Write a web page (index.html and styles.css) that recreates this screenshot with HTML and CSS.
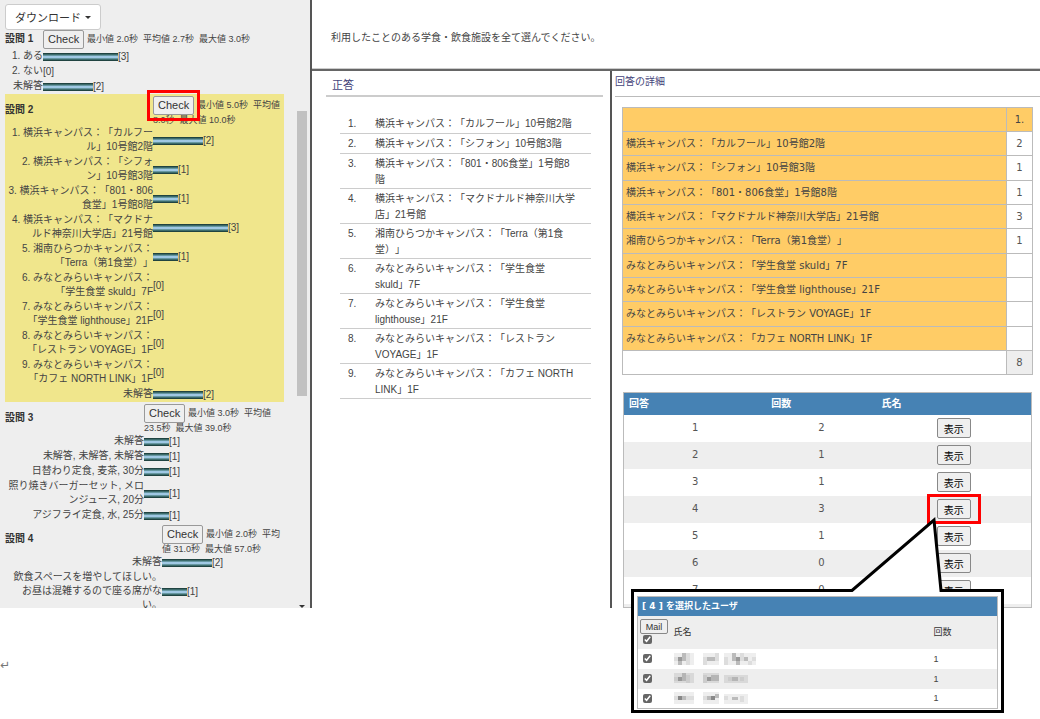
FILE: index.html
```html
<!DOCTYPE html>
<html lang="ja">
<head>
<meta charset="utf-8">
<title>アンケート集計</title>
<link rel="stylesheet" href="styles.css">
</head>
<body>
<div class="page">
  <div class="frames">
    <aside class="sidebar">
      <div class="summary">
        <button class="download" type="button">ダウンロード<span class="caret"></span></button>

        <table class="question q1">
          <tr class="head"><th scope="row">設問 1</th><td><button class="check" type="button">Check</button> <span class="stats">最小値 2.0秒&nbsp; 平均値 2.7秒&nbsp; 最大値 3.0秒</span></td></tr>
          <tr><th scope="row">1. ある</th><td><span class="bar" style="width:75px"></span>[3]</td></tr>
          <tr><th scope="row">2. ない</th><td>[0]</td></tr>
          <tr><th scope="row">未解答</th><td><span class="bar" style="width:50px"></span>[2]</td></tr>
        </table>

        <table class="question q2 selected">
          <tr class="head"><th scope="row">設問 2</th><td><span class="mark"><button class="check" type="button">Check</button></span> <span class="stats">最小値 5.0秒&nbsp; 平均値<br>8.0秒&nbsp; 最大値 10.0秒</span></td></tr>
          <tr><th scope="row">1. 横浜キャンパス：「カルフー<br>ル」10号館2階</th><td><span class="bar" style="width:50px"></span>[2]</td></tr>
          <tr><th scope="row">2. 横浜キャンパス：「シフォ<br>ン」10号館3階</th><td><span class="bar" style="width:25px"></span>[1]</td></tr>
          <tr><th scope="row">3. 横浜キャンパス：「801・806<br>食堂」1号館8階</th><td><span class="bar" style="width:25px"></span>[1]</td></tr>
          <tr><th scope="row">4. 横浜キャンパス：「マクドナ<br>ルド神奈川大学店」21号館</th><td><span class="bar" style="width:75px"></span>[3]</td></tr>
          <tr><th scope="row">5. 湘南ひらつかキャンパス：<br>「Terra（第1食堂）」</th><td><span class="bar" style="width:25px"></span>[1]</td></tr>
          <tr><th scope="row">6. みなとみらいキャンパス：<br>「学生食堂 skuld」7F</th><td>[0]</td></tr>
          <tr><th scope="row">7. みなとみらいキャンパス：<br>「学生食堂 lighthouse」21F</th><td>[0]</td></tr>
          <tr><th scope="row">8. みなとみらいキャンパス：<br>「レストラン VOYAGE」1F</th><td>[0]</td></tr>
          <tr><th scope="row">9. みなとみらいキャンパス：<br>「カフェ NORTH LINK」1F</th><td>[0]</td></tr>
          <tr><th scope="row">未解答</th><td><span class="bar" style="width:50px"></span>[2]</td></tr>
        </table>

        <table class="question q3">
          <tr class="head"><th scope="row">設問 3</th><td><button class="check" type="button">Check</button> <span class="stats">最小値 3.0秒&nbsp; 平均値<br>23.5秒&nbsp; 最大値 39.0秒</span></td></tr>
          <tr><th scope="row">未解答</th><td><span class="bar" style="width:25px"></span>[1]</td></tr>
          <tr><th scope="row">未解答, 未解答, 未解答</th><td><span class="bar" style="width:25px"></span>[1]</td></tr>
          <tr><th scope="row">日替わり定食, 麦茶, 30分</th><td><span class="bar" style="width:25px"></span>[1]</td></tr>
          <tr><th scope="row">照り焼きバーガーセット, メロ<br>ンジュース, 20分</th><td><span class="bar" style="width:25px"></span>[1]</td></tr>
          <tr><th scope="row">アジフライ定食, 水, 25分</th><td><span class="bar" style="width:25px"></span>[1]</td></tr>
        </table>

        <table class="question q4">
          <tr class="head"><th scope="row">設問 4</th><td><button class="check" type="button">Check</button> <span class="stats">最小値 2.0秒&nbsp; 平均<br>値 31.0秒&nbsp; 最大値 57.0秒</span></td></tr>
          <tr><th scope="row">未解答</th><td><span class="bar" style="width:50px"></span>[2]</td></tr>
          <tr><th scope="row">飲食スペースを増やしてほしい。<br>お昼は混雑するので座る席がな<br>い。</th><td><span class="bar" style="width:25px"></span>[1]</td></tr>
        </table>
      </div>
      <div class="scroll"><div class="thumb"></div><span class="caret"></span></div>
    </aside>

    <main class="main">
      <header class="prompt">利用したことのある学食・飲食施設を全て選んでください。</header>
      <section class="answers">
        <h2>正答</h2>
        <ol>
          <li>横浜キャンパス：「カルフール」10号館2階</li>
          <li>横浜キャンパス：「シフォン」10号館3階</li>
          <li>横浜キャンパス：「801・806食堂」1号館8<br>階</li>
          <li>横浜キャンパス：「マクドナルド神奈川大学<br>店」21号館</li>
          <li>湘南ひらつかキャンパス：「Terra（第1食<br>堂）」</li>
          <li>みなとみらいキャンパス：「学生食堂<br>skuld」7F</li>
          <li>みなとみらいキャンパス：「学生食堂<br>lighthouse」21F</li>
          <li>みなとみらいキャンパス：「レストラン<br>VOYAGE」1F</li>
          <li>みなとみらいキャンパス：「カフェ NORTH<br>LINK」1F</li>
        </ol>
      </section>
      <section class="details">
        <h2>回答の詳細</h2>
        <table class="totals">
          <tr class="top"><th></th><th scope="col">1.</th></tr>
          <tr><th scope="row">横浜キャンパス：「カルフール」10号館2階</th><td>2</td></tr>
          <tr><th scope="row">横浜キャンパス：「シフォン」10号館3階</th><td>1</td></tr>
          <tr><th scope="row">横浜キャンパス：「801・806食堂」1号館8階</th><td>1</td></tr>
          <tr><th scope="row">横浜キャンパス：「マクドナルド神奈川大学店」21号館</th><td>3</td></tr>
          <tr><th scope="row">湘南ひらつかキャンパス：「Terra（第1食堂）」</th><td>1</td></tr>
          <tr><th scope="row">みなとみらいキャンパス：「学生食堂 skuld」7F</th><td></td></tr>
          <tr><th scope="row">みなとみらいキャンパス：「学生食堂 lighthouse」21F</th><td></td></tr>
          <tr><th scope="row">みなとみらいキャンパス：「レストラン VOYAGE」1F</th><td></td></tr>
          <tr><th scope="row">みなとみらいキャンパス：「カフェ NORTH LINK」1F</th><td></td></tr>
          <tr class="sum"><td></td><td>8</td></tr>
        </table>
        <table class="counts">
          <thead><tr><th scope="col">回答</th><th scope="col">回数</th><th scope="col">氏名</th></tr></thead>
          <tbody>
            <tr><td>1</td><td>2</td><td><button class="show" type="button">表示</button></td></tr>
            <tr><td>2</td><td>1</td><td><button class="show" type="button">表示</button></td></tr>
            <tr><td>3</td><td>1</td><td><button class="show" type="button">表示</button></td></tr>
            <tr><td>4</td><td>3</td><td><span class="mark wide"><button class="show" type="button">表示</button></span></td></tr>
            <tr><td>5</td><td>1</td><td><button class="show" type="button">表示</button></td></tr>
            <tr><td>6</td><td>0</td><td><button class="show" type="button">表示</button></td></tr>
            <tr><td>7</td><td>0</td><td><button class="show" type="button">表示</button></td></tr>
            <tr class="tail"><td></td><td></td><td></td></tr>
          </tbody>
        </table>
      </section>
    </main>
  </div>
  <p class="return">↵</p>

  <div class="callout">
    <svg class="pointer" width="100" height="76" viewBox="0 0 100 76" aria-hidden="true">
      <path d="M6 76V73L88 3L94.500 73V76Z" fill="#fff"/>
      <path d="M0 74.500H6L88 4L95 74.500H100" fill="none" stroke="#000" stroke-width="3"/>
    </svg>
    <table class="users">
      <colgroup><col class="pick"><col><col class="times"></colgroup>
      <thead>
        <tr class="title"><th colspan="3">[ 4 ] を選択したユーザ</th></tr>
        <tr class="cols"><td><button class="mail" type="button">Mail</button><input type="checkbox" checked aria-label="全員"></td><td>氏名</td><td>回数</td></tr>
      </thead>
      <tbody>
        <tr><td><input type="checkbox" checked aria-label="ユーザ 1"></td><td>
          <svg class="mosaic" width="84" height="12" viewBox="0 0 84 12" aria-hidden="true"><g fill="#ddd"><path d="M0 0h20v12H0zM29 0h16v12H29zM50 0h32v12H50z" opacity=".5"/><path d="M0 4h4v4H0zM12 0h4v12h-4zM29 4h4v8h-4zM41 0h4v8h-4zM50 4h4v8h-4zM66 0h4v8h-4zM74 8h4v4h-4zM78 4h4v4h-4z"/></g><path d="M4 4h4v4H4zM62 4h4v4h-4z" fill="#999"/><path d="M8 0h4v8H8zM33 4h8v4h-8zM58 0h4v8h-4zM70 4h4v4h-4zM4 8h4v4H4zM62 8h4v4h-4z" fill="#bbb"/></svg></td><td>1</td></tr>
        <tr><td><input type="checkbox" checked aria-label="ユーザ 2"></td><td>
          <svg class="mosaic" width="84" height="12" viewBox="0 0 84 12" aria-hidden="true"><g fill="#ccc"><path d="M0 0h20v10H0zM29 0h16v10H29zM50 2h24v8H50z" opacity=".6"/><path d="M0 4h4v4H0zM12 2h4v8h-4zM29 2h4v8h-4zM54 4h4v4h-4zM66 4h4v4h-4z"/></g><path d="M4 4h4v4H4zM33 4h4v4h-4z" fill="#999"/><path d="M8 0h4v8H8zM37 2h8v6h-8zM58 4h6v4h-6z" fill="#b5b5b5"/></svg></td><td>1</td></tr>
        <tr><td><input type="checkbox" checked aria-label="ユーザ 3"></td><td>
          <svg class="mosaic" width="84" height="12" viewBox="0 0 84 12" aria-hidden="true"><g fill="#ddd"><path d="M0 0h20v12H0zM29 0h16v12H29zM50 2h24v10H50z" opacity=".5"/><path d="M0 4h4v4H0zM12 4h8v4h-8zM29 4h4v4h-4zM50 4h4v4h-4zM66 4h4v6h-4z"/></g><path d="M4 4h4v4H4zM37 4h4v4h-4z" fill="#888"/><path d="M8 4h4v4H8zM33 4h4v4h-4zM41 2h4v4h-4zM58 5h6v3h-6z" fill="#bbb"/></svg></td><td>1</td></tr>
      </tbody>
    </table>
  </div>
</div>
</body>
</html>
```

FILE: styles.css
```css
* { box-sizing: border-box; }

body {
  margin: 0;
  background: #fff;
  color: #444;
  font: 10px/14px "Liberation Sans", "Noto Sans CJK JP", sans-serif;
  text-spacing-trim: space-all;
}

table { border-collapse: collapse; border-spacing: 0; }
th, td { padding: 0; font-weight: normal; text-align: left; }
button { color: #333; font-family: inherit; cursor: pointer; }

.page { position: relative; min-height: 100vh; overflow: hidden; }

.frames {
  display: grid;
  grid-template-columns: 312fr 728fr;
  height: calc(100vh - 111px);
}

/* question summary */
.sidebar {
  display: flex;
  min-height: 0;
  overflow: hidden;
  background: #eee;
  border-right: 2px solid #555;
}
.summary { flex: 1; padding: 4px 12px 0 5px; }

.download {
  display: flex;
  align-items: center;
  gap: 4px;
  height: 26px;
  padding: 0 9px;
  border: 1px solid #ccc;
  border-radius: 3px;
  background: #fff;
  font-size: 11px;
}
.caret {
  border: 3px solid transparent;
  border-top-color: #333;
  border-bottom: 0;
}

.question { width: 100%; table-layout: fixed; }
.question th { padding-bottom: 1px; text-align: right; white-space: nowrap; }
.question td { vertical-align: middle; white-space: nowrap; }
.question .head { height: 32px; line-height: 10px; }
.question .head th { font-weight: bold; text-align: left; color: #333; }
.q1 th { width: 38px; }
.question.q1 .head { height: 19px; }
.q2 th { width: 148px; }
.q3 th { width: 139px; }
.q4 th { width: 157px; }
.selected { background: #f0e68c; }

.check {
  height: 19px;
  padding: 0 4px;
  border: 1px solid #999;
  border-radius: 2px;
  background: #efefef;
  font-size: 11px;
  line-height: 15px;
  vertical-align: middle;
}
.stats { font-size: 9px; }

.bar {
  display: inline-block;
  height: 8px;
  vertical-align: middle;
  background: linear-gradient(#12302c, #4a7f80 25%, #a5cdea 45%, #a5cdea 55%, #4a7f80 75%, #12302c);
}

.mark { position: relative; display: inline-block; vertical-align: middle; }
.mark::after {
  content: "";
  position: absolute;
  inset: -6px;
  border: 3px solid #f00;
  pointer-events: none;
}
.mark.wide::after { inset: -5px -10px; }

.scroll {
  display: flex;
  flex-direction: column;
  justify-content: space-between;
  align-items: center;
  width: 14px;
  padding: 111px 3px 0 0;
}
.thumb { width: 10px; height: 285px; background: #c1c1c1; }

/* question text and its two lower frames */
.main {
  display: grid;
  grid-template-columns: 300fr 428fr;
  grid-template-rows: auto 1fr;
  min-height: 0;
  overflow: hidden;
}
.prompt {
  grid-column: 1 / 3;
  padding: 31px 19px 24px;
  border-bottom: 2px solid #666;
  box-shadow: inset 0 -1px #ccc;
}

h2 {
  margin: 0;
  border-bottom: 1px solid #bbb;
  color: #44447a;
  font-size: 10px;
  font-weight: normal;
}

.answers { padding: 6px 7px 0 14px; border-right: 2px solid #555; line-height: 16px; }
.answers h2 { padding: 0 6px 2px; border-bottom: 2px solid #ccc; font-size: 11px; }
.answers ol { margin: 17px 12px 0 14px; padding: 0; list-style: none; counter-reset: n; }
.answers li {
  min-height: 20px;
  padding: 2px 0 0 35px;
  border-bottom: 1px solid #ccc;
  white-space: nowrap;
  counter-increment: n;
}
.answers li::before { content: counter(n) "."; float: left; width: 27px; margin-left: -27px; }

.details {
  min-width: 0;
  min-height: 0;
  overflow: hidden;
  padding: 4px 0 0 3px;
  color: #555;
  font-family: "DejaVu Sans", "Noto Sans CJK JP", sans-serif;
}
.details h2 { padding: 0 0 7px; }

.totals { width: calc(100% - 14px); margin: 10px 7px 17px; }
.totals th, .totals td { height: 24px; padding: 0 3px; border: 1px solid #bbb; }
.totals tr:nth-child(3n) > * { height: 25px; }
.totals th { background: #fc6; color: #444; }
.totals tr > :last-child { width: 26px; text-align: center; }
.totals .sum td:last-child { background: #eee; }

.counts { width: calc(100% - 16px); margin: 0 8px; border: 1px solid #bbb; table-layout: fixed; }
.counts thead { background: #4682b4; color: #fff; }
.counts th { height: 22px; padding: 0 5px; font-weight: bold; }
.counts th:nth-child(1) { width: 35%; }
.counts th:nth-child(2) { width: 27%; }
.counts td { height: 27px; text-align: center; }
.counts tbody tr:nth-child(even) { background: #eee; }
.counts .tail td { height: 4px; }

.show {
  height: 20px;
  width: 34px;
  padding: 0;
  border: 1px solid #888;
  border-radius: 2px;
  background: #efefef;
  color: #000;
  font-size: 10px;
  vertical-align: middle;
}

.return { margin: 50px 0 0; color: #777; font-size: 12px; font-family: "DejaVu Sans", sans-serif; }

/* user list called out from row 4 */
.callout {
  position: absolute;
  top: 589px;
  right: 36px;
  width: 373px;
  padding: 4px 3px 1px;
  border: 3px solid #000;
  background: #fff;
  font-size: 9px;
}
.pointer { position: absolute; top: -76px; left: 212px; }
.users { width: 100%; border: 1px solid #bbb; table-layout: fixed; line-height: 12px; }
.pick { width: 34px; }
.times { width: 66px; }
.users .title th {
  height: 19px;
  padding-left: 4px;
  background: #4682b4;
  color: #fff;
  font-family: "DejaVu Sans", "Noto Sans CJK JP", sans-serif;
  font-weight: bold;
}
.users .cols { background: #eee; color: #333; }
.users .cols td { height: 33px; }
.users td { height: 20px; padding-left: 2px; }
.users tbody tr:nth-child(even) { background: #eee; }
.users input {
  display: block;
  width: 9px;
  height: 9px;
  margin: 1px 3px;
  accent-color: #666;
}
.mail {
  display: block;
  height: 15px;
  width: 28px;
  padding: 0;
  border: 1px solid #888;
  border-radius: 2px;
  background: #efefef;
  font-size: 9px;
}
.mosaic { display: block; }
```
